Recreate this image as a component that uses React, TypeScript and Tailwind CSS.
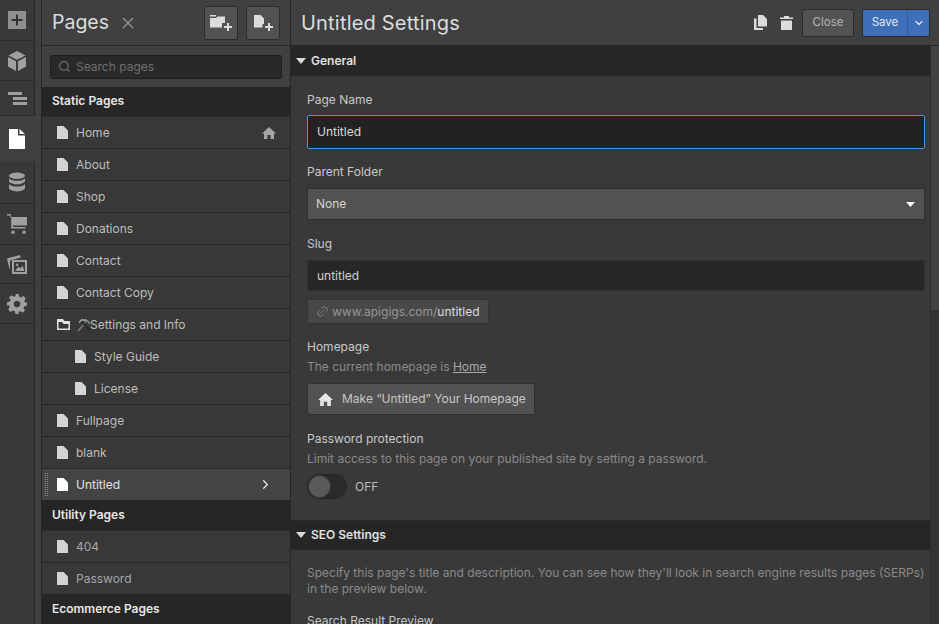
import type { ReactNode } from 'react';
import { ChevronDown, ChevronRight, Search, Link2 } from 'lucide-react';

function PageIcon({ className = 'text-[#d4d4d4]' }: { className?: string }) {
  return (
    <svg width="11" height="13" viewBox="0 0 11 13" className={`shrink-0 ${className}`}>
      <path d="M0 0h6.500L11 4.500V13H0z" fill="currentColor" />
    </svg>
  );
}

function HomeIcon({ size = 14, className = '' }: { size?: number; className?: string }) {
  return (
    <svg width={size} height={size} viewBox="0 0 14 14" className={className}>
      <path d="M7 1 14 7.400H12V13H8.600V9H5.400V13H2V7.400H0z" fill="currentColor" />
    </svg>
  );
}

function Caret() {
  return (
    <svg width="10" height="6" viewBox="0 0 10 6" className="shrink-0 text-[#d9d9d9]">
      <path d="M0 0h10L5 6z" fill="currentColor" />
    </svg>
  );
}

function RailItem({ children, h, active }: { children: ReactNode; h: string; active?: boolean }) {
  return (
    <div className={`flex shrink-0 items-center ${h} ${active ? 'w-[41px] bg-[#404040]' : 'w-[35px] border-b border-r border-b-[#2c2c2c] border-r-[#262626] bg-[#393939]'}`}>
      <div className="flex w-[34px] justify-center">{children}</div>
    </div>
  );
}

function Rail() {
  return (
    <div className="flex w-[41px] shrink-0 flex-col bg-[#3f3f3f]">
      <RailItem h="h-[41px]">
        <svg width="18" height="18" viewBox="0 0 18 18">
          <rect width="18" height="18" fill="#8f8f8f" />
          <path d="M8 3.500h2V8h4.500v2H10v4.500H8V10H3.500V8H8z" fill="#333" />
        </svg>
      </RailItem>
      <RailItem h="h-[40px]">
        <svg width="18" height="20" viewBox="0 0 18 20" className="text-[#a0a0a0]">
          <path d="M9 0 17.500 4.500 9 8.800.5 4.500z M0 6l8 4.200V20L0 15.500z M18 6l-8 4.200V20l8-4.500z" fill="currentColor" />
        </svg>
      </RailItem>
      <RailItem h="h-[35px]">
        <svg width="19" height="13" viewBox="0 0 19 13" className="text-[#a0a0a0]">
          <path d="M0 0h14v3H0z M5 5h14v3H5z M5 10h14v3H5z" fill="currentColor" />
        </svg>
      </RailItem>
      <RailItem h="h-[45px]" active>
        <svg width="16" height="20" viewBox="0 0 16 20" className="text-white">
          <path d="M0 0h9v6.500h7V20H0z M10.500 0 16 5h-5.500z" fill="currentColor" />
        </svg>
      </RailItem>
      <RailItem h="h-[43px]">
        <svg width="16" height="20" viewBox="0 0 17 20" className="text-[#a0a0a0]">
          <ellipse cx="8.500" cy="3.400" rx="8.500" ry="3.400" fill="currentColor" />
          <path d="M0 6c1.500 2 5 2.800 8.500 2.800S15.500 8 17 6v3.500C15.500 11.500 12 12.500 8.500 12.500S1.500 11.500 0 9.500z" fill="currentColor" />
          <path d="M0 12c1.500 2 5 2.800 8.500 2.800S15.500 14 17 12v4.500C17 18.500 13 20 8.500 20S0 18.500 0 16.500z" fill="currentColor" />
        </svg>
      </RailItem>
      <RailItem h="h-[41px]">
        <svg width="20" height="20" viewBox="0 0 20 20" className="text-[#a0a0a0]">
          <path d="M0 0h3.500l.8 3H20v8.500H6v1.500h12.500v1.500H4.200V4L2.500 1.500H0z" fill="currentColor" />
          <circle cx="6" cy="18.300" r="1.700" fill="currentColor" />
          <circle cx="17" cy="18.300" r="1.700" fill="currentColor" />
        </svg>
      </RailItem>
      <RailItem h="h-[39px]">
        <svg width="20" height="19" viewBox="0 0 20 19" className="text-[#a0a0a0]">
          <path d="M0 3.500 13 0l.8 2.500L3 5.500v8.800L2.500 14z" fill="currentColor" />
          <path d="M5 5h15v14H5z M7 7v10h11V7z" fillRule="evenodd" fill="currentColor" />
          <path d="M8 16l3.500-4.500 2 2 2-3 2 5.500z M10 8.500a1.300 1.300 0 1 0 .01 0z" fill="currentColor" />
        </svg>
      </RailItem>
      <RailItem h="h-[40px]">
        <svg width="20" height="20" viewBox="0 0 24 24" className="text-[#a0a0a0]">
          <path
            d="M10 0h4l.6 3.300 2.300 1 2.800-1.900 2.900 2.900-1.900 2.800 1 2.300L24 10v4l-3.300.6-1 2.300 1.900 2.800-2.900 2.900-2.800-1.900-2.300 1L14 24h-4l-.6-3.300-2.300-1-2.800 1.900-2.900-2.900 1.900-2.800-1-2.300L0 14v-4l3.300-.6 1-2.300L2.400 4.300 5.300 1.400l2.800 1.900 2.300-1zM12 8a4 4 0 1 0 .01 0z"
            fillRule="evenodd"
            fill="currentColor"
          />
        </svg>
      </RailItem>
      <div className="w-[35px] flex-1 border-r border-[#262626] bg-[#393939]" />
    </div>
  );
}

function PageRow({ label, indent, children, active, muted }: { label: ReactNode; indent?: boolean; children?: ReactNode; active?: boolean; muted?: boolean }) {
  return (
    <div
      className={`relative flex h-[32px] shrink-0 items-center border-b border-[#262626] pr-[14px] ${indent ? 'pl-[33px]' : 'pl-[15px]'} ${
        active ? 'bg-[#444444] text-[#e2e2e2]' : muted ? 'bg-[#383838] text-[#a6a6a6]' : 'bg-[#383838] text-[#bdbdbd]'
      }`}
    >
      {active && <div className="absolute left-[3px] top-[4px] h-[23px] w-[3px] border-x border-dotted border-[#8a8a8a]" />}
      <PageIcon className={active ? 'text-white' : 'text-[#d4d4d4]'} />
      <span className="ml-[8px] flex-1">{label}</span>
      {children}
    </div>
  );
}

function GroupHeader({ label, h }: { label: string; h: string }) {
  return (
    <div className={`flex ${h} shrink-0 items-center border-b border-[#2c2c2c] bg-[#262626] pb-[1px] pl-[10px] font-semibold text-[#e6e6e6]`}>
      {label}
    </div>
  );
}

function PagesPanel() {
  return (
    <div className="flex w-[250px] shrink-0 flex-col overflow-hidden border-x border-[#262626] bg-[#383838]">
      <div className="flex h-[46px] shrink-0 items-center border-b border-[#262626] bg-[#404040] pl-[10px]">
        <span className="text-[19.500px] leading-none text-[#dcdcdc]">Pages</span>
        <svg width="12" height="12" viewBox="0 0 12 12" className="ml-[13px] text-[#8f8f8f]">
          <path d="M1 1l10 10M11 1 1 11" stroke="currentColor" strokeWidth="1.500" fill="none" />
        </svg>
        <div className="ml-auto mr-[10px] flex gap-[8px]">
          <div className="flex h-[34px] w-[34px] items-center justify-center rounded-[2px] border border-[#2b2b2b] bg-[#525252]">
            <svg width="22" height="16" viewBox="0 0 22 16" className="text-[#dcdcdc]">
              <path d="M0 0h6v1.500H0z" fill="currentColor" />
              <path d="M0 3h6l1.500-1.500H15V8h-3v4.500H0z" fill="currentColor" />
              <path d="M17 8h2v3h3v2h-3v3h-2v-3h-3v-2h3z" fill="currentColor" />
            </svg>
          </div>
          <div className="flex h-[34px] w-[34px] items-center justify-center rounded-[2px] border border-[#2b2b2b] bg-[#525252]">
            <svg width="19" height="16" viewBox="0 0 19 16" className="text-[#dcdcdc]">
              <path d="M0 0h6.500L10 3.500V9H8.500v3.500H0z" fill="currentColor" />
              <path d="M14 8h2v3h3v2h-3v3h-2v-3h-3v-2h3z" fill="currentColor" />
            </svg>
          </div>
        </div>
      </div>
      <div className="flex h-[41px] shrink-0 items-center bg-[#404040] px-[8px]">
        <div className="flex h-[24px] w-full items-center rounded-[2px] border border-[#1f1f1f] bg-[#292929] pl-[7px] text-[#707070]">
          <Search size={13} strokeWidth={2} className="text-[#757575]" />
          <span className="ml-[5px]">Search pages</span>
        </div>
      </div>
      <GroupHeader label="Static Pages" h="h-[30px]" />
      <PageRow label="Home">
        <HomeIcon className="text-[#a6a6a6]" />
      </PageRow>
      <PageRow label="About" />
      <PageRow label="Shop" />
      <PageRow label="Donations" />
      <PageRow label="Contact" />
      <PageRow label="Contact Copy" />
      <div className="flex h-[32px] shrink-0 items-center border-b border-[#262626] bg-[#383838] pl-[15px] text-[#bdbdbd]">
        <svg width="13" height="11" viewBox="0 0 13 11" className="shrink-0 text-[#e2e2e2]">
          <path d="M0 0h6l1.500 2H13v9H0z M1.500 3v6.500h10V5H6.500L5 3z" fillRule="evenodd" fill="currentColor" />
        </svg>
        <svg width="14" height="14" viewBox="0 0 14 14" className="ml-[7px] shrink-0">
          <path d="M1 13 9 4" stroke="#7d7d7d" strokeWidth="1.500" />
          <path d="M13 13 5 3.500" stroke="#2b2b2b" strokeWidth="2" />
          <path d="M2 4.500 5 1.500 9 3" stroke="#a8a8a8" strokeWidth="1.500" fill="none" />
          <path d="M7 1.500 10 2.500 13 6" stroke="#8c8c8c" strokeWidth="1.500" fill="none" />
        </svg>
        <span className="ml-[-1px]">Settings and Info</span>
      </div>
      <PageRow label="Style Guide" indent />
      <PageRow label="License" indent />
      <PageRow label="Fullpage" />
      <PageRow label="blank" />
      <PageRow label="Untitled" active>
        <ChevronRight size={15} className="mr-[3px] text-[#e6e6e6]" />
      </PageRow>
      <GroupHeader label="Utility Pages" h="h-[30px]" />
      <PageRow label="404" muted />
      <PageRow label="Password" muted />
      <GroupHeader label="Ecommerce Pages" h="h-[30px]" />
    </div>
  );
}

function SectionHeader({ label }: { label: string }) {
  return (
    <div className="flex h-[30px] items-center gap-[5px] border-y border-[#2c2c2c] bg-[#262626] pl-[5px] font-semibold text-[#e0e0e0]">
      <Caret />
      {label}
    </div>
  );
}

function Label({ children, className = '' }: { children: ReactNode; className?: string }) {
  return <div className={`leading-[16px] text-[#c8c8c8] ${className}`}>{children}</div>;
}

function Settings() {
  return (
    <div className="flex min-w-0 flex-1 flex-col overflow-hidden bg-[#393939]">
      <div className="flex h-[46px] shrink-0 items-center border-b border-[#262626] bg-[#404040] pl-[10px] pr-[9px]">
        <span className="text-[20px] leading-none tracking-[0.2px] text-[#dcdcdc]">Untitled Settings</span>
        <svg width="13" height="15" viewBox="0 0 13 15" className="ml-auto text-[#dcdcdc]">
          <path d="M4 0h5l4 4v7.500H4z M0 3.500h2.500V13H9v2H0z" fill="currentColor" />
        </svg>
        <svg width="13" height="14" viewBox="0 0 13 14" className="ml-[13px] text-[#dcdcdc]">
          <path d="M4 0h5v1.500h4V3H0V1.500h4z M1 4.500h11V14H1z" fill="currentColor" />
        </svg>
        <div className="ml-[9px] flex h-[28px] w-[52px] items-center justify-center rounded-[2px] border border-[#2b2b2b] bg-[#525252] text-[11.500px] text-[#b5b5b5]">
          Close
        </div>
        <div className="ml-[8px] flex h-[28px] w-[68px] rounded-[2px] border border-[#2b2b2b] bg-[#3f6fb8] text-[11.500px] text-[#dfe6f2]">
          <div className="flex w-[45px] items-center justify-center border-r border-[#335c9c]">Save</div>
          <div className="flex flex-1 items-center justify-center">
            <ChevronDown size={12} strokeWidth={2.500} />
          </div>
        </div>
      </div>
      <div className="flex min-h-0 flex-1">
        <div className="min-w-0 flex-1">
          <SectionHeader label="General" />
          <div className="pb-[21px] pl-[16px] pr-[5px] pt-[16px]">
            <Label>Page Name</Label>
            <div className="mt-[7px] flex h-[34px] items-center rounded-[2px] border border-[#4a90e2] bg-[#222222] px-[9px] text-[#d8d8d8]">
              Untitled
            </div>
            <Label className="mt-[15px]">Parent Folder</Label>
            <div className="mt-[8px] flex h-[32px] items-center justify-between rounded-[2px] border border-[#2f2f2f] bg-[#525252] pl-[8px] pr-[9px] text-[#d4d4d4]">
              None
              <svg width="9" height="5" viewBox="0 0 9 5" className="text-white">
                <path d="M0 0h9L4.500 5z" fill="currentColor" />
              </svg>
            </div>
            <Label className="mt-[16px]">Slug</Label>
            <div className="mt-[8px] flex h-[31px] items-center rounded-[2px] border border-[#2f2f2f] bg-[#272727] pl-[9px] text-[#d0d0d0]">
              untitled
            </div>
            <div className="mt-[8px] flex h-[25px] w-[182px] items-center rounded-[2px] border border-[#333333] bg-[#484848] pl-[8px] text-[#969696]">
              <Link2 size={13} strokeWidth={1.500} className="-rotate-45 text-[#8c8c8c]" />
              <span className="ml-[3px]">www.apigigs.com/</span>
              <span className="text-[#dcdcdc]">untitled</span>
            </div>
            <Label className="mt-[15px]">Homepage</Label>
            <div className="mt-[4px] leading-[16px] text-[#8a8a8a]">
              The current homepage is <span className="text-[#a8a8a8] underline">Home</span>
            </div>
            <div className="mt-[8px] flex h-[32px] w-[228px] items-center rounded-[2px] border border-[#2f2f2f] bg-[#525252] pl-[10px] text-[#c8c8c8]">
              <HomeIcon size={15} className="text-[#e6e6e6]" />
              <span className="ml-[9px]">Make “Untitled” Your Homepage</span>
            </div>
            <Label className="mt-[16px]">Password protection</Label>
            <div className="mt-[4px] leading-[16px] text-[#8a8a8a]">Limit access to this page on your published site by setting a password.</div>
            <div className="mt-[7px] flex items-center">
              <div className="h-[25px] w-[40px] rounded-full border border-[#242424] bg-[#2a2a2a]">
                <div className="h-[23px] w-[23px] rounded-full border border-[#3a3a3a] bg-[#5a5a5a]" />
              </div>
              <span className="ml-[8px] text-[#bdbdbd]">OFF</span>
            </div>
          </div>
          <SectionHeader label="SEO Settings" />
          <div className="pl-[16px] pr-[5px] pt-[15px]">
            <div className="leading-[16px] text-[#8a8a8a]">
              Specify this page's title and description. You can see how they'll look in search engine results pages (SERPs) in the preview below.
            </div>
            <Label className="mt-[16px] leading-[14px]">Search Result Preview</Label>
          </div>
        </div>
        <div className="flex w-[9px] shrink-0 flex-col border-l border-[#2c2c2c] bg-[#333333]">
          <div className="h-[264px] bg-[#424242]" />
        </div>
      </div>
    </div>
  );
}

export default function App() {
  return (
    <div className="flex h-[624px] w-[939px] overflow-hidden bg-[#393939] font-['Inter',sans-serif] text-[12px]">
      <Rail />
      <PagesPanel />
      <Settings />
    </div>
  );
}
